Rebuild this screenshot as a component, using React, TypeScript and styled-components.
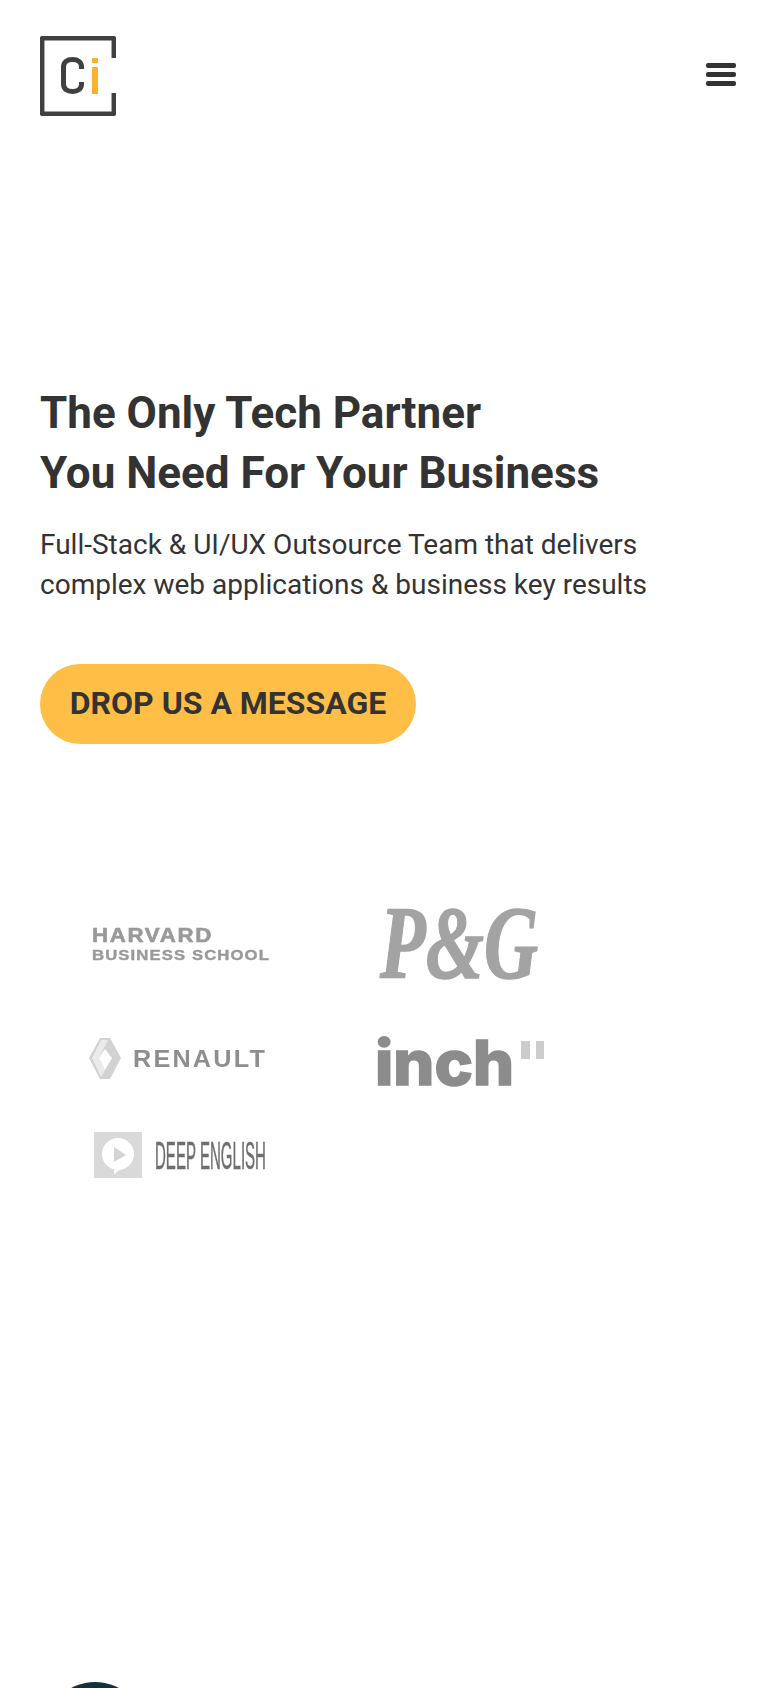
import * as React from "react";
import styled, { createGlobalStyle } from "styled-components";

const GlobalStyle = createGlobalStyle`
    html, body {
        margin: 0;
        padding: 0;
        background: #fff;
        font-family: Roboto, "Liberation Sans", sans-serif;
        color: #333;
    }
`;

const Page = styled.div`
    width: 780px;
    height: 1688px;
    overflow: hidden;
`;

const Header = styled.header`
    display: flex;
    justify-content: space-between;
    align-items: flex-start;
    padding: 36px 44px 0 40px;
`;

const MenuButton = styled.button`
    display: flex;
    flex-direction: column;
    gap: 4px;
    width: 30px;
    margin-top: 27px;
    padding: 0;
    border: 0;
    background: none;
    & > span {
        display: block;
        height: 5px;
        border-radius: 2px;
        background: #333;
    }
`;

const Hero = styled.section`
    padding: 267px 40px 0;
`;

const Title = styled.h1`
    margin: 0;
    font-size: 44px;
    line-height: 60px;
    font-weight: 700;
    color: #333;
`;

const Lead = styled.p`
    margin: 22px 0 0;
    font-size: 28px;
    line-height: 40px;
    font-weight: 400;
    color: #333;
`;

const CallButton = styled.button`
    display: block;
    width: 376px;
    height: 80px;
    margin-top: 59px;
    padding: 0 0 2px;
    border: 0;
    border-radius: 40px;
    background: #ffbf47;
    font-family: inherit;
    font-size: 32px;
    font-weight: 700;
    color: #333;
`;

const Clients = styled.section`
    display: grid;
    grid-template-columns: 286px 190px;
    grid-template-rows: 110px 118px 74px;
    align-items: center;
    margin-top: 145px;
    padding-left: 86px;
`;

const ClientLogo = styled.svg`
    display: block;
    overflow: visible;
    filter: blur(0.5px);
`;

const Avatar = styled.div`
    width: 100px;
    height: 100px;
    margin: 491px 0 0 45px;
    border-radius: 50%;
    background: #12313a;
`;

const CiLogo = () => (
    <svg width="76" height="80" viewBox="0 0 76 80">
        <path d="M73.8 22V2.2H2.2V77.8H73.8V57" fill="none" stroke="#404040" strokeWidth="4.5" strokeLinejoin="round" />
        <path d="M41.5 33V31C41.5 26 38 23.5 32.5 23.5C27 23.5 23.5 26 23.5 31V48C23.5 53 27 55.5 32.5 55.5C38 55.5 41.5 53 41.5 48V46" fill="none" stroke="#404040" strokeWidth="5" />
        <rect x="52" y="22" width="6" height="5" fill="#fbb12d" />
        <rect x="52" y="31" width="6" height="27" fill="#fbb12d" />
    </svg>
);

const HarvardLogo = () => (
    <ClientLogo width="190" height="50" viewBox="0 0 190 50">
        <text x="6" y="23" fontFamily="Liberation Sans" fontWeight="700" fontSize="20" letterSpacing="1.5" fill="#999" stroke="#999" strokeWidth="0.6" textLength="121" lengthAdjust="spacingAndGlyphs">HARVARD</text>
        <text x="6" y="41" fontFamily="Liberation Sans" fontWeight="700" fontSize="15" letterSpacing="1" fill="#999" stroke="#999" strokeWidth="0.4" textLength="178" lengthAdjust="spacingAndGlyphs">BUSINESS SCHOOL</text>
    </ClientLogo>
);

const PgLogo = () => (
    <ClientLogo width="190" height="140" viewBox="0 0 190 140">
        <text x="8" y="104" fontFamily="Liberation Serif" fontWeight="700" fontStyle="italic" fontSize="104" fill="#a3a3a3" stroke="#a3a3a3" strokeWidth="1.5" textLength="158" lengthAdjust="spacingAndGlyphs">P&amp;G</text>
    </ClientLogo>
);

const RenaultLogo = () => (
    <ClientLogo width="190" height="60" viewBox="0 0 190 60">
        <path d="M14 10H24L35 30L24 51H14L3 30Z" fill="#d2d2d2" />
        <path d="M15 12H22L13 30L19 42L15 49L6 30Z" fill="#eaeaea" />
        <path d="M19 21L26 30L19 42L13 30Z" fill="#fff" />
        <text x="47" y="39" fontFamily="Liberation Sans" fontWeight="700" fontSize="23" letterSpacing="2" fill="#8e8e8e" textLength="134" lengthAdjust="spacingAndGlyphs">RENAULT</text>
    </ClientLogo>
);

const InchLogo = () => (
    <ClientLogo width="190" height="100" viewBox="0 0 190 100">
        <text x="3" y="77" fontFamily="Inter" fontWeight="800" fontSize="62" fill="#8c8c8c" stroke="#8c8c8c" strokeWidth="1.5" textLength="139" lengthAdjust="spacingAndGlyphs">inch</text>
        <rect x="149" y="33" width="9" height="18" fill="#ccc" />
        <rect x="164" y="33" width="8" height="18" fill="#ccc" />
    </ClientLogo>
);

const DeepEnglishLogo = () => (
    <ClientLogo width="190" height="60" viewBox="0 0 190 60">
        <rect x="8" y="8" width="48" height="46" fill="#d9d9d9" />
        <circle cx="32" cy="30" r="16" fill="#fff" />
        <path d="M28 46L35 45L28 50Z" fill="#fff" />
        <path d="M28 23L40 31L28 38Z" fill="#d4d4d4" />
        <text x="69" y="45" fontFamily="Liberation Sans" fontSize="39" fill="#6f6f6f" stroke="#6f6f6f" strokeWidth="0.5" textLength="111" lengthAdjust="spacingAndGlyphs">DEEP ENGLISH</text>
    </ClientLogo>
);

const App = () => (
    <Page>
        <GlobalStyle />
        <Header>
            <CiLogo />
            <MenuButton aria-label="menu">
                <span />
                <span />
                <span />
            </MenuButton>
        </Header>
        <Hero>
            <Title>
                The Only Tech Partner
                <br />
                You Need For Your Business
            </Title>
            <Lead>
                Full-Stack &amp; UI/UX Outsource Team that delivers
                <br />
                complex web applications &amp; business key results
            </Lead>
            <CallButton>DROP US A MESSAGE</CallButton>
        </Hero>
        <Clients>
            <HarvardLogo />
            <PgLogo />
            <RenaultLogo />
            <InchLogo />
            <DeepEnglishLogo />
        </Clients>
        <Avatar />
    </Page>
);

export default App;
